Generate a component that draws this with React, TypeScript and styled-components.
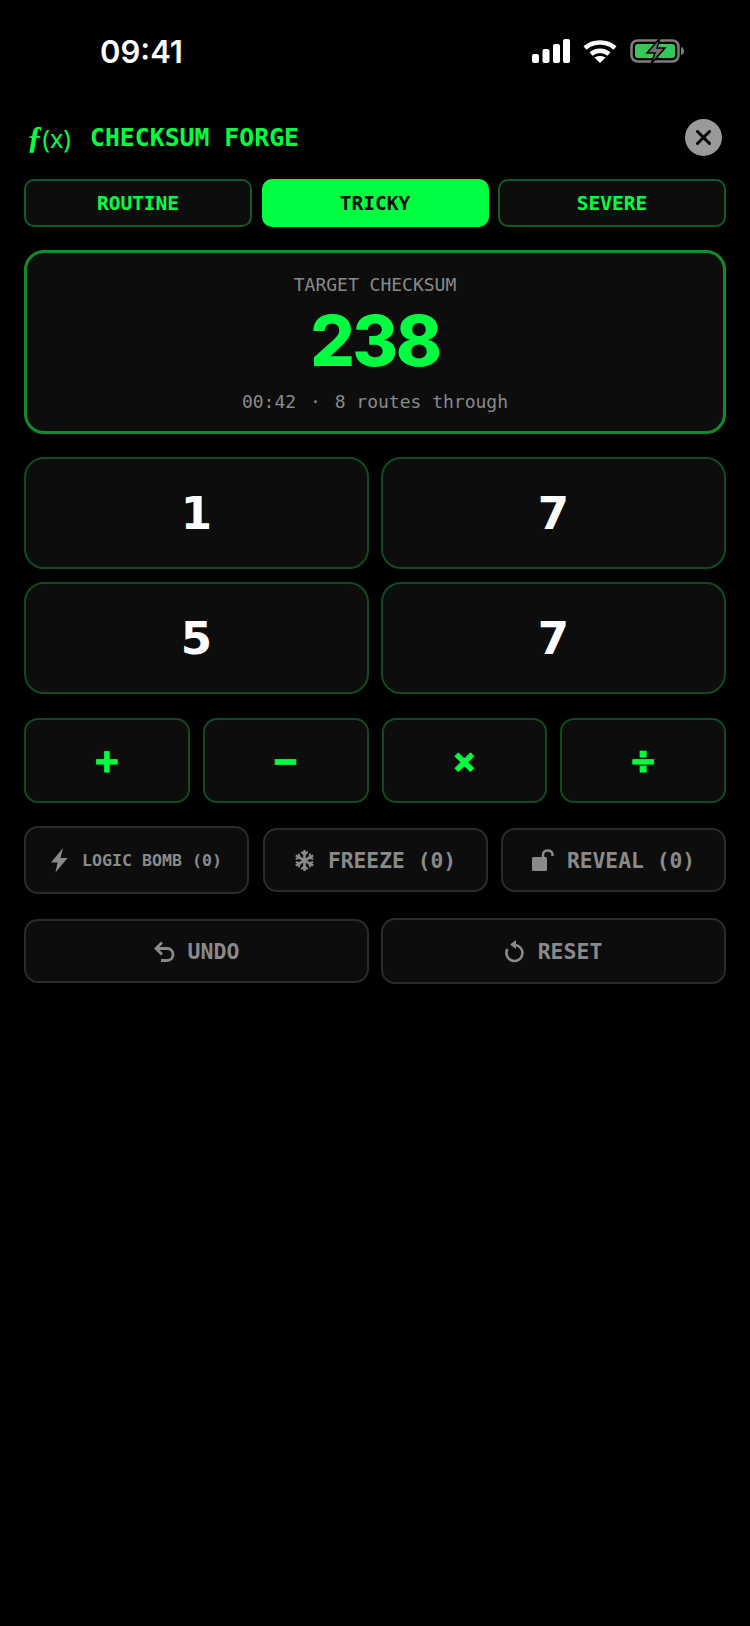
import React from "react";
import styled, {createGlobalStyle} from "styled-components";
import {FaSnowflake} from "react-icons/fa";

const GlobalStyle = createGlobalStyle`
  html, body {
    margin: 0;
    padding: 0;
    background: #000;
  }
  body {
    font-family: 'DejaVu Sans Mono', monospace;
    width: 750px;
    height: 1626px;
    overflow: hidden;
  }
`

const MONO = `'DejaVu Sans Mono', 'Liberation Mono', monospace`
const GREEN = '#00ff41'
const MUTED = '#8a8a8a'

const StatusBar = styled.div`
  height: 100px;
  padding: 37px 66px 0 100px;
  box-sizing: border-box;
  display: flex;
  justify-content: space-between;
  align-items: flex-start;
`

const Clock = styled.div`
  font-family: Inter, sans-serif;
  font-weight: 600;
  font-size: 31px;
  line-height: 30px;
  color: #fff;
`

const StatusIcons = styled.div`
  display: flex;
  align-items: center;
  gap: 13px;
  margin-top: 1px;
`

const Main = styled.main`
  padding: 0 24px;
  display: flex;
  flex-direction: column;
`

const Header = styled.header`
  height: 79px;
  box-sizing: border-box;
  display: flex;
  align-items: center;
  padding: 0 4px 4px 3px;
`

const Logo = styled.span`
  font-family: 'Noto Sans', sans-serif;
  font-size: 25px;
  color: ${GREEN};
  width: 63px;
  white-space: nowrap;
  i {
    font-family: 'Liberation Serif', serif;
    font-size: 31px;
    font-weight: 700;
  }
`

const Title = styled.h1`
  flex: 1;
  margin: 0;
  font-family: ${MONO};
  font-weight: 700;
  font-size: 24.800px;
  color: ${GREEN};
`

const CloseButton = styled.button`
  width: 37px;
  height: 37px;
  border: none;
  border-radius: 50%;
  background: #9a9a9a;
  padding: 0;
  display: flex;
  align-items: center;
  justify-content: center;
`

const Tabs = styled.div`
  display: grid;
  grid-template-columns: 228px 227px 228px;
  justify-content: space-between;
  margin-bottom: 23px;
`

const Tab = styled.button<{$active?: boolean}>`
  height: 48px;
  border-radius: 10px;
  border: 2px solid ${p => p.$active ? GREEN : '#14592a'};
  background: ${p => p.$active ? GREEN : '#0d0d0d'};
  color: ${p => p.$active ? '#041008' : GREEN};
  font-family: ${MONO};
  font-weight: 700;
  font-size: 19.500px;
  padding: 0;
`

const TargetCard = styled.section`
  height: 184px;
  box-sizing: border-box;
  border: 3px solid #128a2e;
  border-radius: 20px;
  background: #0d0d0d;
  display: flex;
  flex-direction: column;
  align-items: center;
  margin-bottom: 23px;
  padding-top: 20px;
`

const TargetLabel = styled.div`
  font-family: ${MONO};
  font-weight: 500;
  font-size: 18px;
  line-height: 24px;
  color: ${MUTED};
`

const TargetValue = styled.div`
  font-family: Inter, sans-serif;
  font-weight: 800;
  font-size: 70px;
  line-height: 76px;
  letter-spacing: -2.500px;
  color: ${GREEN};
  margin-top: 6px;
`

const TargetMeta = styled.div`
  font-family: ${MONO};
  font-size: 18px;
  line-height: 24px;
  color: ${MUTED};
  margin-top: 11px;
  white-space: pre;
`

const MetaDot = styled.span`
  margin: 0 3px;
`

const Numbers = styled.div`
  display: grid;
  grid-template-columns: 1fr 1fr;
  gap: 13px 12px;
  margin-bottom: 24px;
`

const NumberTile = styled.button`
  height: 112px;
  border: 2px solid #114a22;
  border-radius: 20px;
  background: #0d0d0d;
  color: #fff;
  font-family: 'DejaVu Sans', sans-serif;
  font-weight: 700;
  font-size: 45px;
  padding: 0;
`

const Operators = styled.div`
  display: grid;
  grid-template-columns: repeat(4, 1fr);
  gap: 13px;
  margin-bottom: 23px;
`

const OperatorKey = styled.button`
  height: 85px;
  border: 2px solid #114a22;
  border-radius: 14px;
  background: #0d0d0d;
  color: ${GREEN};
  font-family: ${MONO};
  font-weight: 700;
  font-size: 38px;
  -webkit-text-stroke: 1px ${GREEN};
  padding: 0;
`

const Powers = styled.div`
  display: grid;
  grid-template-columns: repeat(3, 225px);
  justify-content: space-between;
  align-items: center;
  height: 68px;
  margin-bottom: 24px;
`

const GreyButton = styled.button<{$height: number}>`
  height: ${p => p.$height}px;
  border: 2px solid #2b2b2b;
  border-radius: 14px;
  background: #0d0d0d;
  color: ${MUTED};
  font-family: ${MONO};
  font-weight: 700;
  padding: 0;
  display: flex;
  align-items: center;
  justify-content: center;
`

const PowerButton = styled(GreyButton)<{$small?: boolean}>`
  font-size: ${p => p.$small ? 16.600 : 21.300}px;
  gap: ${p => p.$small ? 14 : 13}px;
`

const Controls = styled.div`
  display: grid;
  grid-template-columns: 1fr 1fr;
  gap: 12px;
  align-items: center;
`

const ControlButton = styled(GreyButton)`
  font-size: 21.500px;
  gap: 13px;
`

const SignalIcon = () => (
  <svg width="38" height="24" viewBox="0 0 38 24" fill="#fff">
    <rect x="0" y="15" width="7" height="9" rx="2"/>
    <rect x="10.500" y="10" width="7" height="14" rx="2"/>
    <rect x="21" y="5" width="7" height="19" rx="2"/>
    <rect x="31" y="0" width="7" height="24" rx="2"/>
  </svg>
)

const WifiIcon = () => (
  <svg width="34" height="24" viewBox="0 0 34 24" fill="none" stroke="#fff" strokeWidth="4.500">
    <path d="M2 9 C10 1.500 24 1.500 32 9"/>
    <path d="M8 15 C13 10.500 21 10.500 26 15"/>
    <path d="M17 24 L11.500 18.500 C14.500 16.500 19.500 16.500 22.500 18.500 Z" fill="#fff" stroke="none"/>
  </svg>
)

const BatteryIcon = () => (
  <svg width="54" height="26" viewBox="0 0 54 26">
    <rect x="1.500" y="2.500" width="47" height="21" rx="6" fill="none" stroke="#7d7d7d" strokeWidth="2.500"/>
    <rect x="5" y="6" width="40" height="14" rx="3" fill="#34c759"/>
    <path d="M51 9 C53 9.500 54 11 54 13 C54 15 53 16.500 51 17 Z" fill="#7d7d7d"/>
    <path d="M30 0 L17 15 H25 L21 26 L35 10 H27 Z" fill="#6f6f6f" stroke="#000" strokeWidth="1.500"/>
  </svg>
)

const CloseIcon = () => (
  <svg width="15" height="15" viewBox="0 0 15 15" stroke="#000" strokeWidth="3" strokeLinecap="round">
    <path d="M1.500 1.500 L13.500 13.500 M13.500 1.500 L1.500 13.500"/>
  </svg>
)

const BoltIcon = () => (
  <svg width="17" height="25" viewBox="0 0 17 25" fill={MUTED}>
    <path d="M12 0 L0 14.500 H6.500 L4.500 24.500 L16.500 10 H9.500 Z"/>
  </svg>
)

const UnlockIcon = () => (
  <svg width="22" height="22" viewBox="0 0 22 22">
    <rect x="0" y="8" width="15" height="14" rx="1.500" fill={MUTED}/>
    <path d="M11 8 V5.500 C11 0 20.500 0 20.500 5.500 V7" fill="none" stroke={MUTED} strokeWidth="2.500"/>
  </svg>
)

const UndoIcon = () => (
  <svg width="21" height="21" viewBox="0 0 21 21" fill="none" stroke={MUTED} strokeWidth="2.800">
    <path d="M8 1.500 L2 7.500 L8 13.500"/>
    <path d="M2 7.500 H13 C21 7.500 21 19.500 13 19.500 H7"/>
  </svg>
)

const ResetIcon = () => (
  <svg width="20" height="23" viewBox="0 0 20 23" fill="none" stroke={MUTED} strokeWidth="2.600">
    <path d="M9 5 A8 8 0 1 1 2.500 9"/>
    <path d="M5 4.500 L11 0 V9 Z" fill={MUTED} stroke="none"/>
  </svg>
)

const App = () => {
  const difficulties = ['ROUTINE', 'TRICKY', 'SEVERE']
  const numbers = [1, 7, 5, 7]
  const operators = ['+', '−', '×', '÷']
  return (
    <>
      <GlobalStyle/>
      <StatusBar>
        <Clock>09:41</Clock>
        <StatusIcons>
          <SignalIcon/>
          <WifiIcon/>
          <BatteryIcon/>
        </StatusIcons>
      </StatusBar>
      <Main>
        <Header>
          <Logo><i>ƒ</i>(x)</Logo>
          <Title>CHECKSUM FORGE</Title>
          <CloseButton><CloseIcon/></CloseButton>
        </Header>
        <Tabs>
          {difficulties.map(d => <Tab key={d} $active={d === 'TRICKY'}>{d}</Tab>)}
        </Tabs>
        <TargetCard>
          <TargetLabel>TARGET CHECKSUM</TargetLabel>
          <TargetValue>238</TargetValue>
          <TargetMeta>00:42 <MetaDot>·</MetaDot> 8 routes through</TargetMeta>
        </TargetCard>
        <Numbers>
          {numbers.map((n, i) => <NumberTile key={i}>{n}</NumberTile>)}
        </Numbers>
        <Operators>
          {operators.map(op => <OperatorKey key={op}>{op}</OperatorKey>)}
        </Operators>
        <Powers>
          <PowerButton $height={68} $small><BoltIcon/>LOGIC BOMB (0)</PowerButton>
          <PowerButton $height={64}><FaSnowflake size={21} color={MUTED}/>FREEZE (0)</PowerButton>
          <PowerButton $height={64}><UnlockIcon/>REVEAL (0)</PowerButton>
        </Powers>
        <Controls>
          <ControlButton $height={64}><UndoIcon/>UNDO</ControlButton>
          <ControlButton $height={66}><ResetIcon/>RESET</ControlButton>
        </Controls>
      </Main>
    </>
  )
}

export default App
